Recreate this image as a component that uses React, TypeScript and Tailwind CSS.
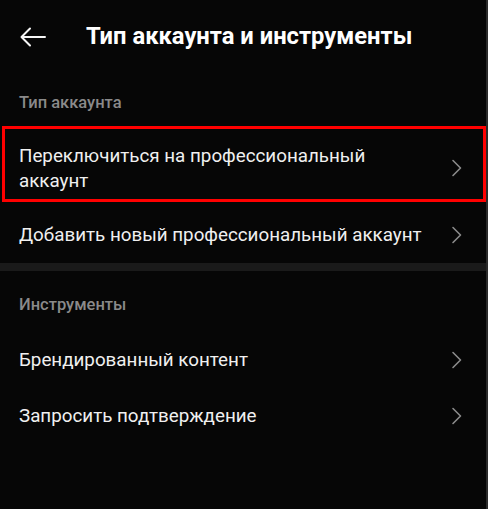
const font = { fontFamily: "Roboto, 'Noto Sans', sans-serif" };

function Chevron({ className = "" }: { className?: string }) {
  return (
    <svg width="12" height="18" viewBox="0 0 12 18" fill="none" className={"shrink-0 " + className}>
      <path d="M2 1.5 L9.5 9 L2 16.5" stroke="#8a8a8a" strokeWidth="1.6" strokeLinecap="round" strokeLinejoin="round" />
    </svg>
  );
}

function Row({ label }: { label: string }) {
  return (
    <div className="h-[56px] flex items-center justify-between pl-[19px] pr-[23px]">
      <span className="text-[18.8px] leading-[26px] text-[#f0f0f0]">{label}</span>
      <Chevron />
    </div>
  );
}

export default function App() {
  return (
    <div style={font} className="w-[488px] h-[509px] bg-[#060606] border-r-2 border-[#2a2a2a] flex flex-col overflow-hidden">
      <div className="h-[74px] flex items-center pl-[20px]">
        <svg width="26" height="20" viewBox="0 0 26 20" fill="none" className="shrink-0">
          <path d="M25 10 H2 M10 1.5 L1.5 10 L10 18.5" stroke="#f5f5f5" strokeWidth="2" strokeLinecap="round" strokeLinejoin="round" />
        </svg>
        <h1 className="ml-[40px] mb-[2px] text-[23.75px] font-bold text-white leading-[28px]">Тип аккаунта и инструменты</h1>
      </div>

      <div className="h-[52px] pl-[19px] pt-[17px]">
        <span className="text-[16.5px] leading-[20px] font-medium text-[#8a8a8a]">Тип аккаунта</span>
      </div>

      <div className="ml-[2px] h-[76px] border-[3px] border-[#ff0000] flex items-center justify-between pl-[14px] pr-[20px]">
        <span className="block text-[18.8px] leading-[25px] text-[#f0f0f0] pt-[9px]">
          Переключиться на профессиональный
          <br />
          аккаунт
        </span>
        <Chevron className="mt-[8px]" />
      </div>

      <div className="h-[61px] flex items-center justify-between pl-[19px] pr-[23px] pt-[4px]">
        <span className="text-[18.8px] leading-[26px] text-[#f0f0f0]">Добавить новый профессиональный аккаунт</span>
        <Chevron />
      </div>

      <div className="h-[8px] bg-[#1a1a1a]" />

      <div className="h-[61px] pl-[19px] pt-[22px]">
        <span className="text-[16.5px] leading-[20px] font-medium text-[#8a8a8a]">Инструменты</span>
      </div>

      <Row label="Брендированный контент" />
      <Row label="Запросить подтверждение" />
    </div>
  );
}
